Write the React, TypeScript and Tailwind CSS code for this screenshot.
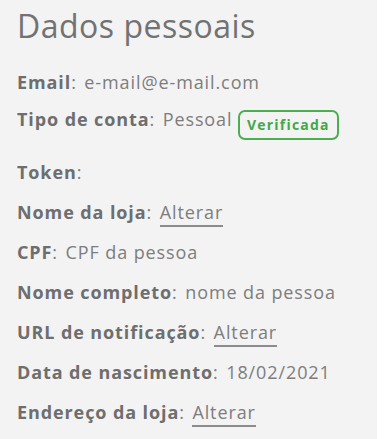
import type { ReactNode } from "react";

type Row = {
  label: string;
  value?: ReactNode;
  className?: string;
};

function ChangeLink() {
  return (
    <a className="border-b-2 border-[#8c8c8c] pb-[1px] text-[#7d7d7d]">Alterar</a>
  );
}

const rows: Row[] = [
  { label: "Email", value: "e-mail@e-mail.com" },
  {
    label: "Tipo de conta",
    className: "-mt-[3px] mb-[4px]",
    value: (
      <>
        Pessoal{" "}
        <span className="mt-[3px] inline-block rounded-[7px] border-2 border-[#4cae50] px-[7px] py-[4px] align-top text-[14px] leading-[18px] font-bold tracking-[1.2px] text-[#43a848]">
          Verificada
        </span>
      </>
    ),
  },
  { label: "Token" },
  { label: "Nome da loja", value: <ChangeLink /> },
  { label: "CPF", value: "CPF da pessoa" },
  { label: "Nome completo", value: "nome da pessoa" },
  { label: "URL de notificação", value: <ChangeLink /> },
  { label: "Data de nascimento", value: "18/02/2021" },
  { label: "Endereço da loja", value: <ChangeLink /> },
];

export default function App() {
  return (
    <div className="flex min-h-[439px] w-full bg-white font-['Open_Sans',sans-serif]">
      <div className="w-[377px] bg-[#f3f3f3] px-[17px] pt-[6px] pb-[10px]">
        <h1 className="text-[32px] leading-[40px] font-normal tracking-[0.5px] text-[#727272]">
          Dados pessoais
        </h1>
        <ul className="mt-[24px] flex flex-col gap-[16px]">
          {rows.map((row) => (
            <li
              key={row.label}
              className={`text-[18px] leading-[24px] tracking-[0.9px] text-[#7d7d7d] ${row.className ?? ""}`}
            >
              <span className="font-bold text-[#6e6e6e]">{row.label}</span>:{" "}
              {row.value && <span className="ml-[2px]">{row.value}</span>}
            </li>
          ))}
        </ul>
      </div>
    </div>
  );
}
